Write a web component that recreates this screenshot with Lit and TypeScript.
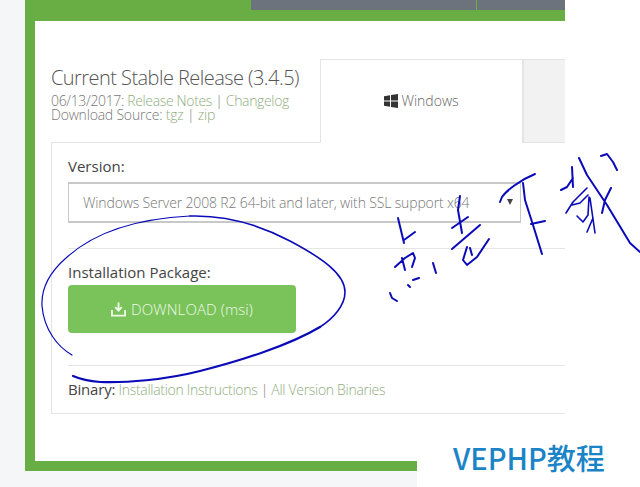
import { LitElement, css, html } from 'lit'
import { customElement } from 'lit/decorators.js'

@customElement('app-root')
export class AppRoot extends LitElement {
  private renderInk() {
    // handwritten annotation, traced from the reference
    return html`
      <svg class="ink" width="640" height="487" viewBox="0 0 640 487" fill="none" stroke="#0a0ab8" stroke-linecap="round" stroke-linejoin="round">
        <path stroke-width="1.2" d="M72 355C58 347 44 330 42 306C41 288 50 272 66 258C90 236 130 219 190 216"/>
        <path stroke-width="1.6" d="M190 216C225 215 258 224 290 241C322 258 345 274 345 292C345 305 334 318 320 327"/>
        <path stroke-width="2.2" d="M320 327C290 345 240 361 200 371C165 380 125 383 100 382C88 381 80 379 73 376"/>
        <g stroke-width="2">
          <path d="M398 218L404 243M404 240L415 232"/>
          <path d="M395 267L405 258L413 253L415 258L412 267M402 258L405 270"/>
          <path d="M390 293L392 298L397 301M408 285L410 287M413 280L419 278M433 263L436 273"/>
          <path d="M460 196L458 210L462 233M452 228L468 217M452 249L480 225"/>
          <path d="M467 247L463 260L467 265L477 257L489 239M470 248L472 255"/>
          <path d="M500 202L502 197C506 191 520 180 535 174M523 183L525 200L533 225L542 254M531 224L545 221"/>
          <path d="M572 167L573 187M561 190L567 187L573 178"/>
          <path stroke-width="1.6" d="M566 213L573 202L587 188M572 205L580 203L588 195M577 216L583 222L588 215L589 197M590 198L592 212L595 233M587 232L593 218"/>
          <path d="M579 158L587 175L607 205L630 243L640 252M602 213L605 200L611 188M601 156L607 154L613 162L617 170"/>
        </g>
      </svg>
    `
  }

  render() {
    return html`
      <div class="page">
        <div class="frame">
          <div class="top-tabs">
            <div class="top-tab first"></div>
            <div class="top-tab"></div>
          </div>
          <div class="panel">
            <div class="head">
              <div class="intro">
                <h1>Current Stable Release (3.4.5)</h1>
                <p class="date">06/13/2017: <a>Release Notes</a> | <a>Changelog</a></p>
                <p>Download Source: <a>tgz</a> | <a>zip</a></p>
              </div>
              <div class="tab active">
                <svg width="14" height="14" viewBox="0 0 14 14" fill="#333">
                  <path d="M0 2.2L6 1.2V6.6H0ZM7 1L14 0V6.6H7ZM0 7.4H6V12.8L0 11.8ZM7 7.4H14V14L7 13Z"/>
                </svg>
                <span>Windows</span>
              </div>
              <div class="tab"></div>
            </div>
            <div class="box">
              <div class="label version">Version:</div>
              <div class="select">
                <span>Windows Server 2008 R2 64-bit and later, with SSL support x64</span>
                <i class="caret"></i>
              </div>
              <div class="rule first"></div>
              <div class="label package">Installation Package:</div>
              <div class="button">
                <svg width="15" height="15" viewBox="0 0 16 15" fill="none" stroke="#eef8e8" stroke-width="2">
                  <path d="M8 0V8M4.5 5L8 8.8L11.5 5"/>
                  <path d="M1 8V14H15V8"/>
                </svg>
                <span>DOWNLOAD (msi)</span>
              </div>
              <div class="rule second"></div>
              <div class="binary"><b>Binary:</b> <a>Installation Instructions</a> | <a>All Version Binaries</a></div>
            </div>
          </div>
        </div>
      </div>
      ${this.renderInk()}
      <div class="watermark">VEPHP教程</div>
    `
  }

  static styles = css`
    :host {
      display: block;
      position: relative;
      width: 640px;
      height: 487px;
      overflow: hidden;
      background: #ffffff;
      font-family: 'Open Sans', 'Noto Sans', sans-serif;
      font-weight: 300;
    }

    .page {
      width: 565px;
      height: 487px;
      box-sizing: border-box;
      padding-left: 25px;
      background: #f4f6f8;
      overflow: hidden;
    }

    .frame {
      width: 600px;
      height: 471px;
      background: #69ae45;
    }

    .top-tabs {
      display: flex;
      height: 21px;
      padding-left: 226px;
      align-items: flex-start;
    }

    .top-tab {
      flex: none;
      width: 300px;
      height: 10px;
      background: #6c737c;
    }

    .top-tab.first {
      width: 225px;
      margin-right: 1px;
    }

    .panel {
      height: 440px;
      margin-left: 10px;
      box-sizing: border-box;
      padding: 38px 0 0 16px;
      background: #ffffff;
    }

    .head {
      display: flex;
      height: 84px;
    }

    .intro {
      flex: none;
      width: 269px;
      box-sizing: border-box;
      border-bottom: 1px solid #e4e4e4;
      color: #777777;
      font-size: 14px;
      letter-spacing: -0.2px;
      line-height: 14px;
    }

    h1 {
      margin: 1px 0 -1px;
      color: #555555;
      font-size: 20px;
      font-weight: 300;
      letter-spacing: -0.55px;
      line-height: 35px;
      white-space: nowrap;
    }

    p {
      margin: 0;
      white-space: nowrap;
    }

    p.date {
      letter-spacing: -0.35px;
    }

    a {
      color: #8fae80;
    }

    .tab {
      flex: none;
      width: 60px;
      box-sizing: border-box;
      background: #f2f2f2;
      border-left: 2px solid #e4e4e4;
      border-top: 1px solid #e4e4e4;
      border-bottom: 1px solid #e4e4e4;
    }

    .tab.active {
      display: flex;
      align-items: center;
      justify-content: center;
      gap: 3px;
      width: 202px;
      background: #ffffff;
      border: 1px solid #e4e4e4;
      border-bottom: none;
      border-right: none;
      color: #666666;
      font-size: 14px;
      padding-bottom: 2px;
    }

    .box {
      height: 271px;
      width: 600px;
      box-sizing: border-box;
      padding: 14px 0 0 16px;
      border-left: 1px solid #e4e4e4;
      border-bottom: 1px solid #e4e4e4;
    }

    .label {
      color: #444444;
      font-size: 15px;
      font-weight: 400;
      line-height: 18px;
    }

    .select {
      display: flex;
      align-items: center;
      justify-content: space-between;
      width: 453px;
      height: 41px;
      margin-top: 7px;
      box-sizing: border-box;
      padding: 0 7px 0 14px;
      border: 1px solid #c8c8c8;
      border-width: 2px 1px;
      color: #777777;
      font-size: 14px;
      font-weight: 300;
      letter-spacing: -0.15px;
      white-space: nowrap;
    }

    .caret {
      width: 0;
      height: 0;
      margin-top: -1px;
      border-left: 3.5px solid transparent;
      border-right: 3.5px solid transparent;
      border-top: 6px solid #444444;
    }

    .rule {
      height: 1px;
      background: #e4e4e4;
    }

    .rule.first {
      margin-top: 25px;
    }

    .package {
      margin-top: 14px;
    }

    .button {
      display: flex;
      align-items: center;
      justify-content: center;
      gap: 5px;
      width: 228px;
      height: 48px;
      margin-top: 4px;
      border-radius: 4px;
      background: #7ac35a;
      color: #eef8e8;
      font-size: 15px;
      letter-spacing: 0.1px;
    }

    .rule.second {
      margin-top: 32px;
    }

    .binary {
      margin-top: 14px;
      color: #777777;
      font-size: 14px;
      letter-spacing: -0.3px;
      line-height: 18px;
    }

    .binary b {
      color: #444444;
      font-size: 15px;
      font-weight: 400;
      letter-spacing: -0.2px;
    }

    .ink {
      position: absolute;
      left: 0;
      top: 0;
    }

    .watermark {
      position: absolute;
      left: 417px;
      top: 440px;
      right: 0;
      bottom: 0;
      box-sizing: border-box;
      padding-left: 36px;
      background: #ffffff;
      color: #1a84c6;
      font-family: 'Noto Sans CJK SC', 'Noto Sans', sans-serif;
      font-size: 29px;
      font-weight: 500;
      line-height: 34px;
    }
  `
}
